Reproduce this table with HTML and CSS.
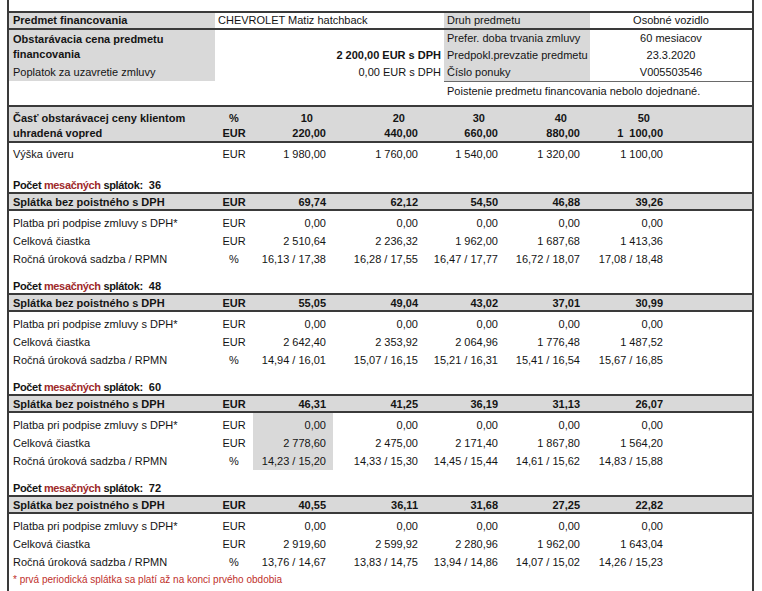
FILE: index.html
```html
<!DOCTYPE html>
<html lang="sk">
<head>
<meta charset="utf-8">
<title>Ponuka financovania</title>
<link rel="stylesheet" href="styles.css">
</head>
<body>
<div class="sheet">
  <div class="top-gap"></div>

  <div class="info-head">
    <div class="lbl gray b">Predmet financovania</div>
    <div class="val">CHEVROLET Matiz hatchback</div>
    <div class="lbl2 gray">Druh predmetu</div>
    <div class="val2">Osobné vozidlo</div>
  </div>

  <div class="info-body">
    <div class="lbl gray b span2">Obstarávacia cena predmetu<br>financovania</div>
    <div class="val right b span2 bottom pre">2  200,00 EUR s DPH</div>
    <div class="lbl2 gray">Prefer. doba trvania zmluvy</div>
    <div class="val2">60 mesiacov</div>
    <div class="lbl2 gray">Predpokl.prevzatie predmetu</div>
    <div class="val2">23.3.2020</div>
    <div class="lbl gray">Poplatok za uzavretie zmluvy</div>
    <div class="val right">0,00 EUR s DPH</div>
    <div class="lbl2 gray">Číslo ponuky</div>
    <div class="val2">V005503546</div>
  </div>

  <div class="info-note">
    <div class="note-blank"></div>
    <div class="note-text">Poistenie predmetu financovania nebolo dojednané.</div>
  </div>

  <div class="rule"></div>

  <div class="head-block">
    <div class="r h15 b">
      <span class="label">Časť obstarávacej ceny klientom</span>
      <span class="unit">%</span>
      <span class="pct">10</span><span class="pct">20</span><span class="pct">30</span><span class="pct">40</span><span class="pct">50</span><span></span>
    </div>
    <div class="r h15 b">
      <span class="label">uhradená vopred</span>
      <span class="unit">EUR</span>
      <span class="num">220,00</span><span class="num">440,00</span><span class="num">660,00</span><span class="num">880,00</span><span class="num">1  100,00</span><span></span>
    </div>
  </div>
  <div class="rule"></div>

  <div class="r h18 pad2">
    <span class="label">Výška úveru</span>
    <span class="unit">EUR</span>
    <span class="num">1 980,00</span><span class="num">1 760,00</span><span class="num">1 540,00</span><span class="num">1 320,00</span><span class="num">1 100,00</span><span></span>
  </div>
  <div class="gap13"></div>

  <section class="term">
    <div class="count b"><span class="count-lbl">Počet <span class="red">mesačných</span> splátok:</span><span>36</span></div>
    <div class="rule"></div>
    <div class="r h15 gray b">
      <span class="label">Splátka bez poistného s DPH</span><span class="unit">EUR</span>
      <span class="num">69,74</span><span class="num">62,12</span><span class="num">54,50</span><span class="num">46,88</span><span class="num">39,26</span><span></span>
    </div>
    <div class="rule"></div>
    <div class="gap3"></div>
    <div class="r h18"><span class="label">Platba pri podpise zmluvy s DPH*</span><span class="unit">EUR</span>
      <span class="num">0,00</span><span class="num">0,00</span><span class="num">0,00</span><span class="num">0,00</span><span class="num">0,00</span><span></span></div>
    <div class="r h18"><span class="label">Celková čiastka</span><span class="unit">EUR</span>
      <span class="num">2 510,64</span><span class="num">2 236,32</span><span class="num">1 962,00</span><span class="num">1 687,68</span><span class="num">1 413,36</span><span></span></div>
    <div class="r h18"><span class="label">Ročná úroková sadzba / RPMN</span><span class="unit">%</span>
      <span class="num">16,13 / 17,38</span><span class="num">16,28 / 17,55</span><span class="num">16,47 / 17,77</span><span class="num">16,72 / 18,07</span><span class="num">17,08 / 18,48</span><span></span></div>
    <div class="gap9"></div>
  </section>

  <section class="term">
    <div class="count b"><span class="count-lbl">Počet <span class="red">mesačných</span> splátok:</span><span>48</span></div>
    <div class="rule"></div>
    <div class="r h15 gray b">
      <span class="label">Splátka bez poistného s DPH</span><span class="unit">EUR</span>
      <span class="num">55,05</span><span class="num">49,04</span><span class="num">43,02</span><span class="num">37,01</span><span class="num">30,99</span><span></span>
    </div>
    <div class="rule"></div>
    <div class="gap3"></div>
    <div class="r h18"><span class="label">Platba pri podpise zmluvy s DPH*</span><span class="unit">EUR</span>
      <span class="num">0,00</span><span class="num">0,00</span><span class="num">0,00</span><span class="num">0,00</span><span class="num">0,00</span><span></span></div>
    <div class="r h18"><span class="label">Celková čiastka</span><span class="unit">EUR</span>
      <span class="num">2 642,40</span><span class="num">2 353,92</span><span class="num">2 064,96</span><span class="num">1 776,48</span><span class="num">1 487,52</span><span></span></div>
    <div class="r h18"><span class="label">Ročná úroková sadzba / RPMN</span><span class="unit">%</span>
      <span class="num">14,94 / 16,01</span><span class="num">15,07 / 16,15</span><span class="num">15,21 / 16,31</span><span class="num">15,41 / 16,54</span><span class="num">15,67 / 16,85</span><span></span></div>
    <div class="gap9"></div>
  </section>

  <section class="term">
    <div class="count b"><span class="count-lbl">Počet <span class="red">mesačných</span> splátok:</span><span>60</span></div>
    <div class="rule"></div>
    <div class="r h15 gray b">
      <span class="label">Splátka bez poistného s DPH</span><span class="unit">EUR</span>
      <span class="num">46,31</span><span class="num">41,25</span><span class="num">36,19</span><span class="num">31,13</span><span class="num">26,07</span><span></span>
    </div>
    <div class="rule"></div>
    <div class="r h21 hl-first"><span class="label">Platba pri podpise zmluvy s DPH*</span><span class="unit">EUR</span>
      <span class="num hl">0,00</span><span class="num">0,00</span><span class="num">0,00</span><span class="num">0,00</span><span class="num">0,00</span><span></span></div>
    <div class="r h18"><span class="label">Celková čiastka</span><span class="unit">EUR</span>
      <span class="num hl">2 778,60</span><span class="num">2 475,00</span><span class="num">2 171,40</span><span class="num">1 867,80</span><span class="num">1 564,20</span><span></span></div>
    <div class="r h18"><span class="label">Ročná úroková sadzba / RPMN</span><span class="unit">%</span>
      <span class="num hl">14,23 / 15,20</span><span class="num">14,33 / 15,30</span><span class="num">14,45 / 15,44</span><span class="num">14,61 / 15,62</span><span class="num">14,83 / 15,88</span><span></span></div>
    <div class="gap9"></div>
  </section>

  <section class="term">
    <div class="count b"><span class="count-lbl">Počet <span class="red">mesačných</span> splátok:</span><span>72</span></div>
    <div class="rule"></div>
    <div class="r h15 gray b">
      <span class="label">Splátka bez poistného s DPH</span><span class="unit">EUR</span>
      <span class="num">40,55</span><span class="num">36,11</span><span class="num">31,68</span><span class="num">27,25</span><span class="num">22,82</span><span></span>
    </div>
    <div class="rule"></div>
    <div class="gap3"></div>
    <div class="r h18"><span class="label">Platba pri podpise zmluvy s DPH*</span><span class="unit">EUR</span>
      <span class="num">0,00</span><span class="num">0,00</span><span class="num">0,00</span><span class="num">0,00</span><span class="num">0,00</span><span></span></div>
    <div class="r h18"><span class="label">Celková čiastka</span><span class="unit">EUR</span>
      <span class="num">2 919,60</span><span class="num">2 599,92</span><span class="num">2 280,96</span><span class="num">1 962,00</span><span class="num">1 643,04</span><span></span></div>
    <div class="r h18"><span class="label">Ročná úroková sadzba / RPMN</span><span class="unit">%</span>
      <span class="num">13,76 / 14,67</span><span class="num">13,83 / 14,75</span><span class="num">13,94 / 14,86</span><span class="num">14,07 / 15,02</span><span class="num">14,26 / 15,23</span><span></span></div>
  </section>

  <div class="footnote">* prvá periodická splátka sa platí až na konci prvého obdobia</div>
</div>
</body>
</html>
```

FILE: styles.css
```css
* { box-sizing: border-box; }

html, body {
  margin: 0;
  padding: 0;
  background: #ffffff;
}

body {
  font-family: "Liberation Sans", Arial, sans-serif;
  font-size: 11px;
  color: #141414;
  overflow: hidden;
}

.sheet {
  margin-left: 7px;
  width: 747px;
  min-height: 591px;
  border-left: 2px solid #3a3a3a;
  border-right: 2px solid #3a3a3a;
}

.b { font-weight: bold; }
.gray { background: #d9d9d9; }
.right { text-align: right; }
.pre { white-space: pre; }
.red { color: #9e2a2a; }

.top-gap {
  height: 13px;
  border-bottom: 2px solid #3a3a3a;
}

.rule {
  height: 2px;
  background: #3a3a3a;
}

/* ---------- info block ---------- */
.info-head {
  display: grid;
  grid-template-columns: 206px 229px 146px 162px;
  height: 17px;
  border-bottom: 2px solid #3a3a3a;
}

.info-head > div {
  line-height: 15px;
  white-space: nowrap;
}

.lbl { padding-left: 4px; }
.val { padding-left: 3px; padding-right: 3px; }
.lbl2 { padding-left: 3px; }
.val2 { text-align: center; }

.info-body {
  display: grid;
  grid-template-columns: 206px 229px 146px 162px;
  grid-template-rows: 17px 17px 17px;
}

.info-body > div {
  line-height: 17px;
  white-space: nowrap;
}

.info-body .span2 {
  grid-row: span 2;
}

.info-body .val.span2 {
  display: flex;
  flex-direction: column;
  justify-content: flex-end;
}

.info-body .lbl.span2 {
  line-height: 15px;
  padding-top: 2px;
}

.info-note {
  display: grid;
  grid-template-columns: 435px 308px;
  height: 24px;
}

.note-text {
  border-top: 1px solid #6a6a6a;
  padding-left: 3px;
  line-height: 18px;
  white-space: nowrap;
}

/* ---------- main table ---------- */
.r {
  display: grid;
  grid-template-columns: 206px 38px 80px 92px 80px 82px 83px 82px;
  align-items: stretch;
  white-space: nowrap;
}

.r > span {
  display: flex;
  align-items: center;
}

.h15 { height: 15px; }
.h18 { height: 18px; }
.h21 { height: 21px; }
.pad2 { height: 20px; padding-top: 2px; }

.hl-first > span { padding-top: 3px; }

.head-block {
  background: #d9d9d9;
  padding-top: 3px;
  padding-bottom: 1px;
}

.label { padding-left: 4px; }
.unit { justify-content: center; }
.num {
  justify-content: flex-end;
  padding-right: 7px;
  white-space: pre;
}
.pct {
  justify-content: flex-end;
  padding-right: 20px;
}
.num.hl { background: #d9d9d9; }

.gap13 { height: 13px; }
.gap9 { height: 9px; }
.gap3 { height: 3px; }

.count {
  height: 16px;
  display: flex;
  align-items: flex-end;
  line-height: 14px;
  padding-left: 4px;
  white-space: nowrap;
}

.count-lbl {
  display: inline-block;
  letter-spacing: -0.35px;
  margin-right: 6px;
}

.footnote {
  height: 18px;
  line-height: 18px;
  padding-left: 4px;
  font-size: 10px;
  color: #c0302b;
}
```
